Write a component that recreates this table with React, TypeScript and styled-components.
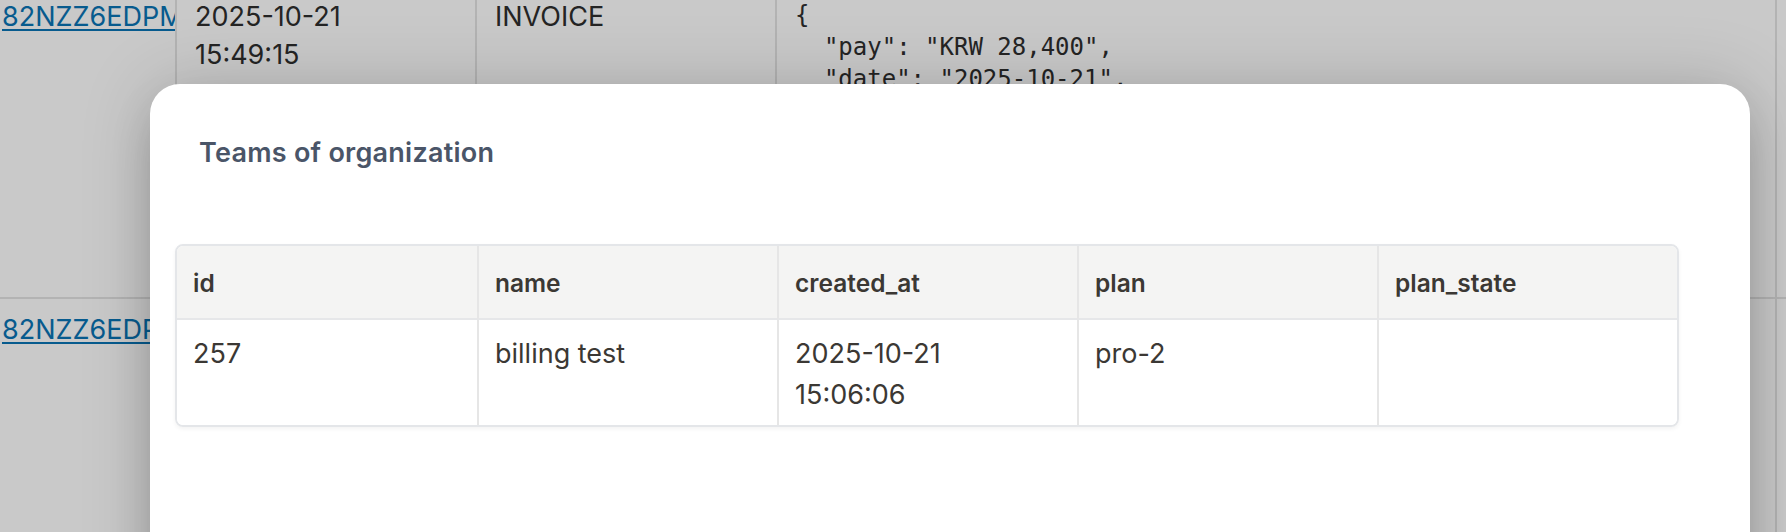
import React from "react";
import styled, { createGlobalStyle } from "styled-components";

const GlobalStyle = createGlobalStyle`
  html, body { margin: 0; padding: 0; background: #ffffff; }
  body { font-family: Inter, "Noto Sans", "Liberation Sans", sans-serif; }
  * { box-sizing: border-box; }
`;

const Page = styled.div`
  position: relative;
  width: 100%;
  height: 532px;
  overflow: hidden;
  background: #ffffff;
`;

const BgTable = styled.div`
  display: grid;
  grid-template-columns: 177px 300px 300px 1000px 1fr;
  margin-top: -14px;
`;

const BgCell = styled.div<{ $h: number; $first?: boolean; $last?: boolean }>`
  height: ${(p) => p.$h}px;
  padding: 12px ${(p) => (p.$first ? "0" : "18px")} 0 ${(p) => (p.$first ? "2px" : "18px")};
  border-right: ${(p) => (p.$last ? "none" : "2px solid #e3e3e3")};
  border-bottom: 2px solid #e3e3e3;
  overflow: hidden;
  white-space: nowrap;
  font-size: 27px;
  line-height: 38px;
  color: #2e2e2e;
`;

const BgText = styled.div`
  white-space: nowrap;
`;

const BgLink = styled.a`
  color: #0a74b4;
  text-decoration: underline;
  text-underline-offset: 3px;
  white-space: nowrap;
`;

const Json = styled.pre`
  margin: 1px 0 0 0;
  font-family: "DejaVu Sans Mono", "Liberation Mono", monospace;
  font-size: 24px;
  line-height: 32px;
  color: #2e2e2e;
`;

const Overlay = styled.div`
  position: absolute;
  inset: 0;
  background: rgba(0, 0, 0, 0.21);
`;

const Modal = styled.div`
  position: absolute;
  left: 150px;
  top: 84px;
  width: 1600px;
  height: 620px;
  background: #ffffff;
  border-radius: 30px;
  padding: 25px;
  box-shadow: 0 0 70px rgba(0, 0, 0, 0.17), 0 25px 50px -12px rgba(0, 0, 0, 0.25);
  display: flex;
  flex-direction: column;
  align-items: flex-start;
`;

const Title = styled.h2`
  margin: 0;
  padding: 24px 24px 0 24px;
  font-size: 27px;
  line-height: 39px;
  font-weight: 600;
  color: #4a5568;
  letter-spacing: 0.25px;
`;

const Table = styled.div`
  margin-top: 72px;
  display: grid;
  grid-template-columns: repeat(5, 300px);
  border: 2px solid #e4e6e9;
  border-radius: 8px;
  overflow: hidden;
  box-shadow: 0 2px 4px rgba(0, 0, 0, 0.05);
`;

const HeadCell = styled.div<{ $first?: boolean }>`
  background: #f4f4f3;
  border-left: ${(p) => (p.$first ? "none" : "2px solid #e6e6e6")};
  border-bottom: 2px solid #e6e7e9;
  padding: 20px 16px 17px 16px;
  font-size: 24.5px;
  line-height: 35px;
  font-weight: 600;
  color: #3b3834;
`;

const BodyCell = styled.div<{ $first?: boolean }>`
  background: #ffffff;
  border-left: ${(p) => (p.$first ? "none" : "2px solid #e6e6e6")};
  padding: 13px 16px 10px 16px;
  min-height: 104px;
  font-size: 27px;
  line-height: 41px;
  font-weight: 400;
  color: #3b3834;
`;

const Line = styled.div``;

const headers = ["id", "name", "created_at", "plan", "plan_state"];
const row: string[][] = [["257"], ["billing test"], ["2025-10-21", "15:06:06"], ["pro-2"], []];

const json = `{
  "pay": "KRW 28,400",
  "date": "2025-10-21",
  "plan": "pro-2",
  "team": 257,
  "status": "paid",
  "method": "card",
  "period": "monthly",
  "currency": "KRW"
}`;

export default function App() {
  return (
    <>
      <GlobalStyle />
      <Page>
        <BgTable>
          <BgCell $h={313} $first>
            <BgLink href="#">82NZZ6EDPM4KQ7</BgLink>
          </BgCell>
          <BgCell $h={313}>
            <BgText>2025-10-21</BgText>
            <BgText>15:49:15</BgText>
          </BgCell>
          <BgCell $h={313}>
            <BgText>INVOICE</BgText>
          </BgCell>
          <BgCell $h={313}>
            <Json>{json}</Json>
          </BgCell>
          <BgCell $h={313} $last />
          <BgCell $h={260} $first>
            <BgLink href="#">82NZZ6EDPM4KQ8</BgLink>
          </BgCell>
          <BgCell $h={260}>
            <BgText>2025-10-21</BgText>
            <BgText>15:49:15</BgText>
          </BgCell>
          <BgCell $h={260}>
            <BgText>INVOICE</BgText>
          </BgCell>
          <BgCell $h={260}>
            <Json>{json}</Json>
          </BgCell>
          <BgCell $h={260} $last />
        </BgTable>
        <Overlay />
        <Modal>
          <Title>Teams of organization</Title>
          <Table>
            {headers.map((h, i) => (
              <HeadCell key={h} $first={i === 0}>
                {h}
              </HeadCell>
            ))}
            {row.map((lines, i) => (
              <BodyCell key={i} $first={i === 0}>
                {lines.map((l) => (
                  <Line key={l}>{l}</Line>
                ))}
              </BodyCell>
            ))}
          </Table>
        </Modal>
      </Page>
    </>
  );
}
